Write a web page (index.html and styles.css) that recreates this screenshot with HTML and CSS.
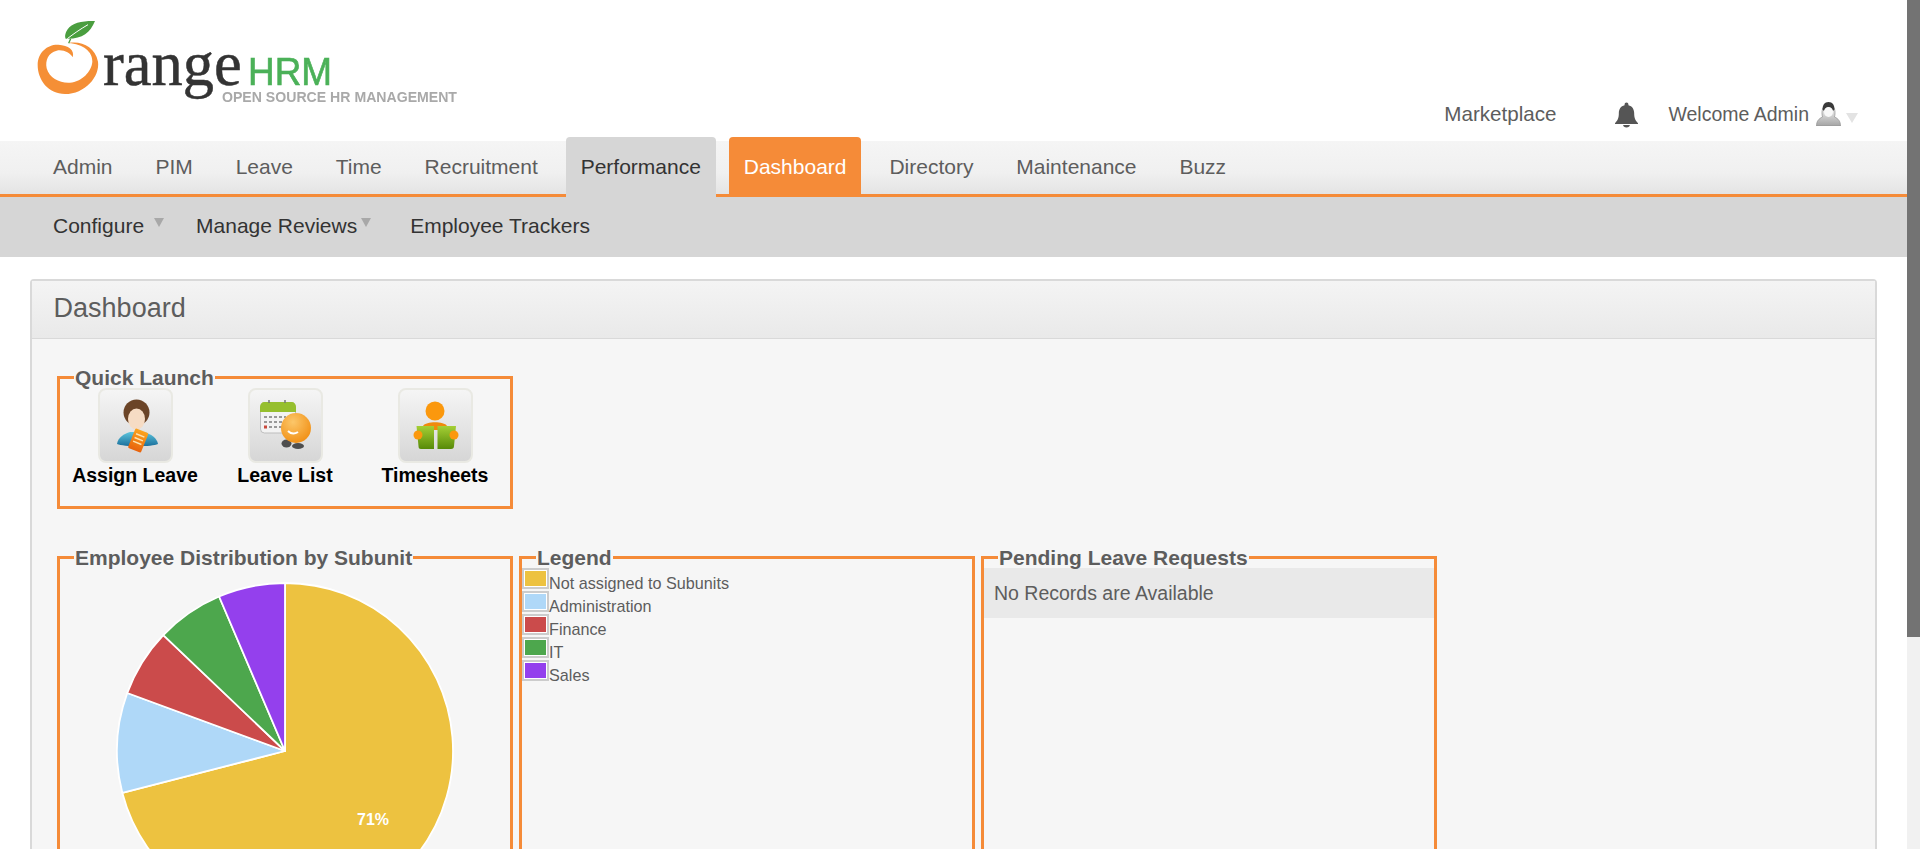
FILE: index.html
```html
<!DOCTYPE html>
<html lang="en">
<head>
  <meta charset="UTF-8">
  <title>OrangeHRM - Dashboard</title>
  <link rel="stylesheet" href="styles.css">
</head>
<body>

  <div class="scrollbar"><div class="scrollbar-thumb"></div></div>

  <header class="top-header">
    <svg class="logo" viewBox="0 0 1560 390" width="520" height="130" role="img" aria-label="OrangeHRM">
      <path fill="#f58f36" d="M205 129C245 122 285 140 294 185C300 230 255 282 195 282C145 282 113 240 113 195C113 155 145 132 175 134C205 136 225 150 218 172C210 158 190 148 170 152C145 158 135 180 140 205C148 235 180 250 210 248C245 245 275 215 277 185C278 155 250 132 205 129Z"/>
      <path fill="#4a9e3f" d="M285 63C250 62 215 68 203 88C195 100 194 110 197 116C245 118 270 100 285 63Z"/>
      <path fill="none" stroke="#fff" stroke-width="3" d="M202 116C220 102 240 88 264 74"/>
      <path fill="none" stroke="#4a9e3f" stroke-width="4" d="M206 130L212 116"/>
      <text class="logo-range" x="309" y="255" textLength="416" lengthAdjust="spacingAndGlyphs">range</text>
      <text class="logo-hrm" x="744" y="255" textLength="252" lengthAdjust="spacingAndGlyphs">HRM</text>
      <text class="logo-tag" x="666" y="307" textLength="705" lengthAdjust="spacingAndGlyphs">OPEN SOURCE HR MANAGEMENT</text>
    </svg>

    <div class="user-area">
      <a class="marketplace">Marketplace</a>
      <svg class="bell" viewBox="0 0 24 26" width="23" height="26">
        <path fill="#555" d="M12 0C13.200 0 14 .9 14 2V2.800C18 3.700 20 7 20 11C20 16 21 18.500 24 21.500V22.500H0V21.500C3 18.500 4 16 4 11C4 7 6 3.700 10 2.800V2C10 .9 10.800 0 12 0Z"/>
        <path fill="#555" d="M8.500 23.500H15.500C15.500 25 14 26 12 26C10 26 8.500 25 8.500 23.500Z"/>
      </svg>
      <span class="welcome">Welcome Admin</span>
      <svg class="avatar" viewBox="0 0 25 24" width="25" height="24">
        <defs>
          <linearGradient id="bust" x1="0" y1="0" x2="0" y2="1">
            <stop offset="0" stop-color="#f4f4f4"/>
            <stop offset="1" stop-color="#a4a4a4"/>
          </linearGradient>
        </defs>
        <path fill="url(#bust)" stroke="#8f8f8f" stroke-width=".7" d="M.5 24C.5 19 3 16.500 6.500 15C5.500 11 6 6 8 5L17 5C19 6 19.500 11 18.500 15C22 16.500 24.500 19 24.500 24Z"/>
        <path fill="#3a3a3a" d="M12.500 0C16.500 0 18.500 3 18.500 7.500L17 9C16 6.500 14.500 5.500 12.500 5.500C10.500 5.500 9 6.500 8 9L6.500 7.500C6.500 3 8.500 0 12.500 0Z"/>
        <ellipse fill="#f8f8f8" cx="12.500" cy="10" rx="4.500" ry="5"/>
      </svg>
      <span class="user-caret"></span>
    </div>
  </header>

  <nav class="main-nav">
    <ul class="main-menu">
      <li><a class="main-link">Admin</a></li>
      <li><a class="main-link">PIM</a></li>
      <li><a class="main-link">Leave</a></li>
      <li><a class="main-link">Time</a></li>
      <li><a class="main-link">Recruitment</a></li>
      <li><a class="main-link main-link-open">Performance</a></li>
      <li><a class="main-link main-link-active">Dashboard</a></li>
      <li><a class="main-link">Directory</a></li>
      <li><a class="main-link">Maintenance</a></li>
      <li><a class="main-link">Buzz</a></li>
    </ul>
  </nav>

  <nav class="sub-nav">
    <a class="sub-link sub-link-configure">Configure<span class="sub-caret"></span></a>
    <a class="sub-link sub-link-reviews">Manage Reviews<span class="sub-caret"></span></a>
    <a class="sub-link">Employee Trackers</a>
  </nav>

  <main class="panel">
    <h1 class="panel-title">Dashboard</h1>
    <div class="panel-body">

      <fieldset class="box box-quick">
        <legend>Quick Launch</legend>
        <a class="launch">
          <span class="tile">
            <svg class="tile-icon" viewBox="0 0 71 71" width="71" height="71">
              <defs>
                <linearGradient id="shirt" x1="0" y1="0" x2="0" y2="1">
                  <stop offset="0" stop-color="#5cc4dc"/>
                  <stop offset="1" stop-color="#1a6f9c"/>
                </linearGradient>
                <linearGradient id="paper" x1="0" y1="0" x2="0" y2="1">
                  <stop offset="0" stop-color="#fba41e"/>
                  <stop offset="1" stop-color="#e8620c"/>
                </linearGradient>
              </defs>
              <path fill="url(#shirt)" d="M17 54C18 47 24 44 30 42L44 42C51 44 57 48 58 54C52 57 24 57 17 54Z"/>
              <circle fill="#6b4427" cx="36.500" cy="22.500" r="13"/>
              <ellipse fill="#f6dcc4" cx="36.500" cy="29" rx="8.500" ry="10.500"/>
              <g transform="rotate(22 38 51)">
                <rect fill="url(#paper)" x="31" y="40" width="14" height="21" rx="1.500"/>
                <path stroke="#fde3b0" stroke-width="1.500" d="M33.500 45H42.500M33.500 49H42.500M33.500 53H42.500"/>
              </g>
            </svg>
          </span>
          <span class="launch-label">Assign Leave</span>
        </a>
        <a class="launch">
          <span class="tile">
            <svg class="tile-icon" viewBox="0 0 71 71" width="71" height="71">
              <defs>
                <radialGradient id="ball" cx=".4" cy=".3" r=".8">
                  <stop offset="0" stop-color="#fcc76a"/>
                  <stop offset="1" stop-color="#f08a0c"/>
                </radialGradient>
              </defs>
              <rect fill="#f3f3f3" stroke="#bdbdbd" x="10.500" y="13" width="35" height="30" rx="4"/>
              <path fill="#96bf2e" d="M10 17C10 14 12 12 14 12H42C44 12 46 14 46 17V22H10Z"/>
              <path stroke="#777" stroke-width="1.500" d="M19 10V13M35 10V13"/>
              <path stroke="#999" stroke-width="2" stroke-dasharray="3 2" d="M14 27H36M14 32H34M14 37H32"/>
              <rect fill="#c9483a" x="14" y="35.500" width="3" height="3"/>
              <ellipse fill="#4e4e4e" cx="36.500" cy="53.500" rx="5" ry="4"/>
              <ellipse fill="#4e4e4e" cx="48" cy="56" rx="6" ry="3"/>
              <circle fill="url(#ball)" cx="46" cy="38" r="15"/>
              <path fill="none" stroke="#fff" stroke-width="2" d="M38 41C41 44 45 44 48 42"/>
            </svg>
          </span>
          <span class="launch-label">Leave List</span>
        </a>
        <a class="launch">
          <span class="tile">
            <svg class="tile-icon" viewBox="0 0 71 71" width="71" height="71">
              <defs>
                <linearGradient id="book" x1="0" y1="0" x2="0" y2="1">
                  <stop offset="0" stop-color="#a5cf35"/>
                  <stop offset="1" stop-color="#578a08"/>
                </linearGradient>
              </defs>
              <circle fill="#fb980d" cx="35" cy="21" r="9.500"/>
              <path fill="#f08a0c" d="M23 36C26 31 44 31 47 36V40H23Z"/>
              <path fill="url(#book)" d="M16.500 36H34V59H21C19 59 18.500 58 18.500 56Z"/>
              <path fill="url(#book)" d="M37.500 36H56L54 56C54 58 53 59 51 59H37.500Z"/>
              <circle fill="#fb980d" cx="18" cy="45" r="4.500"/>
              <circle fill="#fb980d" cx="54" cy="45" r="4.500"/>
            </svg>
          </span>
          <span class="launch-label">Timesheets</span>
        </a>
      </fieldset>

      <div class="box-row">
        <fieldset class="box box-tall">
          <legend>Employee Distribution by Subunit</legend>
          <svg class="pie" viewBox="0 0 340 340" width="340" height="340">
            <g stroke="#fff" stroke-width="1.800" stroke-linejoin="round">
              <path fill="#edc240" d="M170 170V2A168 168 0 1 1 7.300 211.800Z"/>
              <path fill="#afd8f8" d="M170 170L7.300 211.800A168 168 0 0 1 12.300 112Z"/>
              <path fill="#cb4b4b" d="M170 170L12.300 112A168 168 0 0 1 48.300 54.100Z"/>
              <path fill="#4da74d" d="M170 170L48.300 54.100A168 168 0 0 1 104.100 15.500Z"/>
              <path fill="#9440ed" d="M170 170L104.100 15.500A168 168 0 0 1 170 2Z"/>
            </g>
            <text class="pie-label" x="258" y="244" text-anchor="middle">71%</text>
          </svg>
        </fieldset>

        <fieldset class="box box-tall">
          <legend>Legend</legend>
          <div class="legend-row"><span class="swatch swatch-none"></span>Not assigned to Subunits</div>
          <div class="legend-row"><span class="swatch swatch-admin"></span>Administration</div>
          <div class="legend-row"><span class="swatch swatch-finance"></span>Finance</div>
          <div class="legend-row"><span class="swatch swatch-it"></span>IT</div>
          <div class="legend-row"><span class="swatch swatch-sales"></span>Sales</div>
        </fieldset>

        <fieldset class="box box-tall">
          <legend>Pending Leave Requests</legend>
          <div class="no-records">No Records are Available</div>
        </fieldset>
      </div>

    </div>
  </main>

</body>
</html>
```

FILE: styles.css
```css
* {
  box-sizing: border-box;
}

body {
  margin: 0 13px 0 0;
  padding-bottom: 31px;
  background: #fff;
  font-family: "Liberation Sans", Arial, sans-serif;
  color: #5d5d5d;
}

/* window scrollbar, headless chrome does not paint one */
.scrollbar {
  position: fixed;
  top: 0;
  right: 0;
  bottom: 0;
  width: 13px;
  background: #f1f1f1;
}

.scrollbar-thumb {
  height: 637px;
  background: #737373;
}

/* header */
.top-header {
  display: flex;
  justify-content: space-between;
  align-items: flex-end;
  height: 141px;
  padding: 0 49px 13px 0;
}

.logo {
  flex-shrink: 0;
  align-self: flex-start;
  filter: blur(.4px);
}

.logo-range {
  font-family: "Liberation Serif", serif;
  font-size: 189px;
  fill: #333;
  stroke: #333;
  stroke-width: 1.500px;
}

.logo-hrm {
  font-family: "Liberation Sans", sans-serif;
  font-size: 118px;
  fill: #4bb158;
  stroke: #4bb158;
  stroke-width: 2px;
}

.logo-tag {
  font-family: "Liberation Sans", sans-serif;
  font-size: 43px;
  font-weight: bold;
  fill: #a9a9a9;
}

.user-area {
  display: flex;
  align-items: center;
  height: 28px;
}

.marketplace {
  font-size: 20.600px;
  line-height: 24px;
  margin-right: 59px;
}

.bell {
  margin: 2px 30px 0 0;
}

.welcome {
  font-size: 19.500px;
  line-height: 24px;
  margin-right: 7px;
}

.avatar {
  margin-right: 5px;
}

.user-caret {
  width: 0;
  height: 0;
  margin-top: 8px;
  border-left: 6px solid transparent;
  border-right: 6px solid transparent;
  border-top: 10px solid #e3e3e3;
}

/* main menu */
.main-nav {
  display: flow-root;
  height: 56px;
  background: linear-gradient(#f5f5f5, #f0f0f0 60%, #e4e4e4);
  border-bottom: 3px solid #f58b38;
}

.main-menu {
  display: flex;
  list-style: none;
  margin: -4px 0 0;
  padding: 0 0 0 38px;
}

.main-menu li {
  margin-right: 12.900px;
}

.main-link {
  display: block;
  height: 57px;
  padding: 0 15px;
  font-size: 21px;
  line-height: 59px;
  color: #5d5d5d;
  border-radius: 4px 4px 0 0;
}

.main-link-open {
  height: 60px;
  background: #d6d6d6;
  color: #333;
  position: relative;
}

.main-link-active {
  background: #f58b38;
  color: #fff;
}

/* sub menu */
.sub-nav {
  display: flex;
  align-items: center;
  height: 60px;
  padding: 0 0 3px 53px;
  background: #d6d6d6;
}

.sub-link {
  display: flex;
  align-items: center;
  margin-right: 32px;
  font-size: 21px;
  color: #333;
}

.sub-link-reviews {
  margin-right: 39px;
}

.sub-caret {
  width: 0;
  height: 0;
  margin: 0 0 6px 4px;
  border-left: 5.500px solid transparent;
  border-right: 5.500px solid transparent;
  border-top: 9px solid #a8a8a8;
}

.sub-link-configure .sub-caret {
  margin-left: 10px;
}

/* panel */
.panel {
  margin: 22px 30.300px 0 30px;
  background: #f6f6f6;
  border: 2px solid #d9d9d9;
  border-radius: 4px;
}

.panel-title {
  height: 58px;
  margin: 0;
  padding-left: 21.600px;
  font-size: 27px;
  font-weight: normal;
  line-height: 54px;
  background: linear-gradient(#f4f4f4, #e9e9e9);
  border-bottom: 1px solid #d9d9d9;
}

.panel-body {
  padding: 28px 0 91px 25px;
}

.box {
  min-width: 0;
  width: 456px;
  margin: 0;
  padding: 0;
  border: 3px solid #f58b38;
}

.box legend {
  margin-left: 14px;
  padding: 0 1px;
  font-size: 21px;
  font-weight: bold;
  line-height: 21px;
  color: #5d5d5d;
}

.box-quick {
  display: flex;
  height: 142px;
}

.box-row {
  display: flex;
  gap: 6px;
  margin-top: 38px;
}

.box-tall {
  height: 460px;
}

/* quick launch */
.launch {
  display: flex;
  flex-direction: column;
  align-items: center;
  width: 150px;
}

.launch-label {
  font-size: 19.500px;
  font-weight: bold;
  line-height: 24px;
  color: #000;
  white-space: nowrap;
}

.tile {
  width: 75px;
  height: 75px;
  margin-left: 1px;
  background: linear-gradient(#f5f5f5, #d6d6d6);
  border: 2px solid #e9e9e3;
  border-radius: 8px;
}

.tile-icon {
  display: block;
  filter: blur(.4px);
}

/* pie */
.pie {
  display: block;
  margin: 13px 0 0 55px;
}

.pie-label {
  font-family: "Liberation Sans", sans-serif;
  font-size: 16px;
  font-weight: bold;
  fill: #fff;
}

/* legend */
.legend-row {
  font-size: 16.200px;
  line-height: 15px;
}

.swatch {
  display: inline-block;
  width: 27px;
  height: 21px;
  border: 2px solid #ccc;
  outline: 1px solid #fff;
  outline-offset: -3px;
}

.swatch-none {
  background: #edc240;
}

.swatch-admin {
  background: #afd8f8;
}

.swatch-finance {
  background: #cb4b4b;
}

.swatch-it {
  background: #4da74d;
}

.swatch-sales {
  background: #9440ed;
}

/* pending */
.no-records {
  height: 50px;
  padding-left: 10px;
  font-size: 19.500px;
  line-height: 50px;
  background: #e9e9e9;
}
```
